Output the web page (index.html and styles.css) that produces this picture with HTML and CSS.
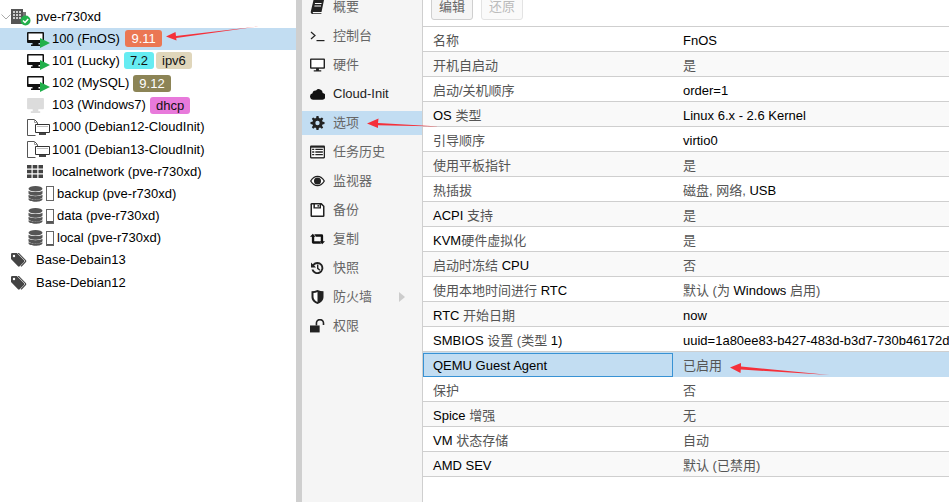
FILE: index.html
```html
<!DOCTYPE html>
<html lang="zh">
<head>
<meta charset="utf-8">
<title>pve-r730xd</title>
<link rel="stylesheet" href="styles.css">
</head>
<body>
<svg class="defs" width="0" height="0">
  <defs>
    <symbol id="vm-on" viewBox="0 0 17 14"><path d="M1 0h15a1 1 0 0 1 1 1v9a1 1 0 0 1-1 1h-4.500v1.500H13V14H4v-1.500h1.500V11H1a1 1 0 0 1-1-1V1a1 1 0 0 1 1-1z" fill="#111"/><path d="M1.500 1.500h14V8h-14z" fill="#fff"/></symbol>
    <symbol id="tpl" viewBox="0 0 23 17"><path d="M.5.500h7l3 3v2M.5.500v16h8" fill="none" stroke="#555"/><path d="M7.500.500v3h3" fill="none" stroke="#999"/><path d="M8.500 5.500h14v8h-14z" fill="#fff" stroke="#333"/><path d="M12 14h7v2h-7z" fill="#444"/><path d="M10 7h11v1H10z" fill="#bbb"/></symbol>
    <symbol id="grid" viewBox="0 0 16 13"><path d="M0 0h4.500v3.500H0zM5.700 0h4.600v3.500H5.700zM11.500 0H16v3.500h-4.500zM0 4.700h4.500v3.600H0zM5.700 4.700h4.600v3.600H5.700zM11.500 4.700H16v3.600h-4.500zM0 9.500h4.500V13H0zM5.700 9.500h4.600V13H5.700zM11.500 9.500H16V13h-4.500z" fill="#444"/></symbol>
    <symbol id="db" viewBox="0 0 15 16"><ellipse cx="7.500" cy="2.800" rx="7" ry="2.800" fill="#555"/><path d="M.5 4.700c1.500 1.800 12.500 1.800 14 0v2.500c0 3.300-14 3.300-14 0zM.5 8.800c1.500 1.800 12.500 1.800 14 0v2.300c0 3.300-14 3.300-14 0zM.5 12.300c1.500 1.800 12.500 1.800 14 0v1c0 3.300-14 3.300-14 0z" fill="#555"/></symbol>
    <symbol id="tag" viewBox="0 0 17 14"><path d="M0 1.200A1.200 1.200 0 0 1 1.200 0h4.600L13 7.200a1.200 1.200 0 0 1 0 1.700l-4.300 4.300a1.200 1.200 0 0 1-1.700 0L0 6z" fill="#444"/><path d="M8 0l7 7.200a1.500 1.500 0 0 1 0 1.800l-4.500 4.700-.9-.6 4.300-4.500a1 1 0 0 0 0-1.200L6.500 0z" fill="#444"/><circle cx="3" cy="3" r="1.200" fill="#fff"/></symbol>
  </defs>
</svg>

<div class="app">
  <aside class="tree">
    <div class="row">
      <svg class="chev" viewBox="0 0 10 6" width="10" height="6"><path d="M.5.500L5 5 9.500.500" fill="none" stroke="#aaa"/></svg>
      <span class="node-icon">
        <svg viewBox="0 0 20 18" width="20" height="18"><path d="M0 1h12v15H0z" fill="#555"/><path d="M12 4h3v6h-3z" fill="#777"/><path d="M2 3h2v2H2zM5 3h2v2H5zM8 3h2v2H8zM2 6h2v2H2zM5 6h2v2H5zM8 6h2v2H8zM2 9h2v2H2zM5 9h2v2H5zM8 9h2v2H8z" fill="#ccc"/><circle cx="14.500" cy="12.500" r="5" fill="#21b04b"/><path d="M12 12.500l2 2 3.200-3.600" fill="none" stroke="#fff" stroke-width="1.500"/></svg>
      </span>
      <span>pve-r730xd</span>
    </div>
    <div class="row guest selected"><span class="guest-icon"><svg width="17" height="14"><use href="#vm-on"/></svg><i class="play"></i></span><span>100 (FnOS)</span><span class="tag t-orange">9.11</span></div>
    <div class="row guest"><span class="guest-icon"><svg width="17" height="14"><use href="#vm-on"/></svg><i class="play"></i></span><span>101 (Lucky)</span><span class="tag t-cyan">7.2</span><span class="tag t-sand">ipv6</span></div>
    <div class="row guest"><span class="guest-icon"><svg width="17" height="14"><use href="#vm-on"/></svg><i class="play"></i></span><span>102 (MySQL)</span><span class="tag t-olive">9.12</span></div>
    <div class="row guest"><span class="guest-icon off"><svg width="18" height="16" viewBox="0 0 18 16"><path d="M1 0h16a1 1 0 0 1 1 1v10a1 1 0 0 1-1 1h-5v2h2v2H4v-2h2v-2H1a1 1 0 0 1-1-1V1a1 1 0 0 1 1-1z" fill="#dcdcdc"/></svg></span><span>103 (Windows7)</span><span class="tag t-pink">dhcp</span></div>
    <div class="row guest"><span class="guest-icon"><svg class="tpl" width="23" height="17"><use href="#tpl"/></svg></span><span>1000 (Debian12-CloudInit)</span></div>
    <div class="row guest"><span class="guest-icon"><svg class="tpl" width="23" height="17"><use href="#tpl"/></svg></span><span>1001 (Debian13-CloudInit)</span></div>
    <div class="row guest"><span class="guest-icon grid"><svg width="16" height="13"><use href="#grid"/></svg></span><span>localnetwork (pve-r730xd)</span></div>
    <div class="row guest"><span class="storage-icon"><svg width="15" height="16"><use href="#db"/></svg><i class="gauge"></i></span><span>backup (pve-r730xd)</span></div>
    <div class="row guest"><span class="storage-icon"><svg width="15" height="16"><use href="#db"/></svg><i class="gauge g-mid"></i></span><span>data (pve-r730xd)</span></div>
    <div class="row guest"><span class="storage-icon"><svg width="15" height="16"><use href="#db"/></svg><i class="gauge g-low"></i></span><span>local (pve-r730xd)</span></div>
    <div class="row pool"><span class="tag-icon"><svg width="17" height="14"><use href="#tag"/></svg></span><span>Base-Debain13</span></div>
    <div class="row pool"><span class="tag-icon"><svg width="17" height="14"><use href="#tag"/></svg></span><span>Base-Debian12</span></div>
  </aside>

  <div class="splitter"></div>

  <nav class="nav">
    <div class="nav-item"><svg class="nav-icon" viewBox="0 0 14 14"><path d="M3 0h10.500L11 12H2.500a1 1 0 0 0 0 1.200H11l-.2.800H2C.8 14 0 13 .3 11.500z" fill="#222"/><path d="M4.500 3h6.500v1H4.300zM4 5.500h6.500v1H3.800z" fill="#fff"/></svg><span>概要</span></div>
    <div class="nav-item"><svg class="nav-icon" viewBox="0 0 14 14"><path d="M.5 3l4 3.500-4 3.500" fill="none" stroke="#222" stroke-width="1.200"/><path d="M6 11h8v1.200H6z" fill="#222"/></svg><span>控制台</span></div>
    <div class="nav-item"><svg class="nav-icon" viewBox="0 0 16 14"><path d="M1 0h14a1 1 0 0 1 1 1v9a1 1 0 0 1-1 1H9.500v1.500H12V14H4v-1.500h2.500V11H1a1 1 0 0 1-1-1V1a1 1 0 0 1 1-1z" fill="#222"/><path d="M1.500 1.500h13v8h-13z" fill="#fff"/></svg><span>硬件</span></div>
    <div class="nav-item"><svg class="nav-icon" viewBox="0 0 16 12"><path d="M3.500 12A3.500 3.500 0 0 1 2.700 5.100 3 3 0 0 1 6.400 2.300 4 4 0 0 1 13.500 5 3.500 3.500 0 0 1 12.500 12z" fill="#111"/></svg><span class="latin">Cloud-Init</span></div>
    <div class="nav-item active"><svg class="nav-icon" viewBox="0 0 14 14"><path d="M6 0h2l.4 2 1.300.5L11.400 1.400 12.800 2.800 11.600 4.500l.5 1.300 1.900.3v2l-2 .4-.5 1.200 1.200 1.700-1.400 1.400-1.700-1.200-1.200.5-.4 1.900H6l-.4-2-1.200-.5-1.700 1.200-1.400-1.400 1.200-1.700-.5-1.200L0 8V6l2-.3.500-1.300L1.300 2.800l1.400-1.400 1.700 1.100 1.200-.5z" fill="#222"/><circle cx="7" cy="7" r="2.200" fill="#c2ddf2"/></svg><span>选项</span></div>
    <div class="nav-item"><svg class="nav-icon" viewBox="0 0 14 12"><path d="M1 0h12a1 1 0 0 1 1 1v10a1 1 0 0 1-1 1H1a1 1 0 0 1-1-1V1a1 1 0 0 1 1-1z" fill="#222"/><path d="M1.200 2h11.600v8.800H1.200z" fill="#fff"/><path d="M2 3h2v1.200H2zM5 3h7v1.200H5zM2 5.400h2v1.200H2zM5 5.400h7v1.200H5zM2 7.800h2V9H2zM5 7.800h7V9H5z" fill="#222"/></svg><span>任务历史</span></div>
    <div class="nav-item"><svg class="nav-icon" viewBox="0 0 14 10"><path d="M0 5c3.500-6.600 10.500-6.600 14 0-3.500 6.600-10.500 6.600-14 0z" fill="#222"/><path d="M1.300 5c3-5 8.400-5 11.400 0-3 5-8.400 5-11.400 0z" fill="#fff"/><circle cx="7" cy="5" r="3.300" fill="#222"/></svg><span>监视器</span></div>
    <div class="nav-item"><svg class="nav-icon" viewBox="0 0 12 12"><path d="M1 0h8.500L12 2.500V11a1 1 0 0 1-1 1H1a1 1 0 0 1-1-1V1a1 1 0 0 1 1-1z" fill="#222"/><path d="M1.300 1.300h1.200v3.500h6.500V1.500l1.700 1.600v7.600H1.300z" fill="#fff"/><path d="M3.800 1.300h4v2.300h-4zM2.500 6.500h7v3.600h-7z" fill="#fff"/><path d="M6 1.800h1.200v1.500H6z" fill="#222"/></svg><span>备份</span></div>
    <div class="nav-item"><svg class="nav-icon" viewBox="0 0 16 11"><path d="M3 0l3 3.200H4.500V8H10l2 2.500H3.500Q2 10.500 2 9V3.200H0zM13 11l3-3.200h-2V2Q14 .5 12.500 .5H4.500L6.500 3h5v4.800H10z" fill="#111"/></svg><span>复制</span></div>
    <div class="nav-item"><svg class="nav-icon" viewBox="0 0 14 14"><path d="M2.200 3.200A6 6 0 1 1 1 8.500h2A4.100 4.100 0 1 0 3.600 4.600L5.500 6.400H.5V1.500z" fill="#222"/><path d="M6.500 3.500h1.400v3.600l2 1.600-.9 1-2.500-2z" fill="#222"/></svg><span>快照</span></div>
    <div class="nav-item"><svg class="nav-icon" viewBox="0 0 12 14"><path d="M6 0c2 .8 4 1.200 6 1.200V7c0 3.500-3 6-6 7-3-1-6-3.500-6-7V1.200C2 1.200 4 .8 6 0z" fill="#222"/><path d="M6 2v10c-2-.9-4-2.700-4-5V3c1.400-.1 2.700-.5 4-1z" fill="#fff"/></svg><span>防火墙</span><i class="caret"></i></div>
    <div class="nav-item"><svg class="nav-icon" viewBox="0 0 14 12"><path d="M0 5.500h9V12H0z" fill="#222"/><path d="M6 5.500V3.300a3.300 3.300 0 0 1 6.600 0V5" fill="none" stroke="#222" stroke-width="1.500"/></svg><span>权限</span></div>
  </nav>

  <main class="main">
    <div class="toolbar">
      <button class="btn">编辑</button>
      <button class="btn disabled">还原</button>
    </div>
    <div class="table">
      <div class="tr"><div class="k"><span class="zh">名称</span></div><div class="v">FnOS</div></div>
      <div class="tr"><div class="k"><span class="zh">开机自启动</span></div><div class="v"><span class="zh">是</span></div></div>
      <div class="tr"><div class="k"><span class="zh">启动/关机顺序</span></div><div class="v">order=1</div></div>
      <div class="tr"><div class="k">OS <span class="zh">类型</span></div><div class="v">Linux 6.x - 2.6 Kernel</div></div>
      <div class="tr"><div class="k"><span class="zh">引导顺序</span></div><div class="v">virtio0</div></div>
      <div class="tr"><div class="k"><span class="zh">使用平板指针</span></div><div class="v"><span class="zh">是</span></div></div>
      <div class="tr"><div class="k"><span class="zh">热插拔</span></div><div class="v"><span class="zh">磁盘, 网络,</span> USB</div></div>
      <div class="tr"><div class="k">ACPI <span class="zh">支持</span></div><div class="v"><span class="zh">是</span></div></div>
      <div class="tr"><div class="k">KVM<span class="zh">硬件虚拟化</span></div><div class="v"><span class="zh">是</span></div></div>
      <div class="tr"><div class="k"><span class="zh">启动时冻结</span> CPU</div><div class="v"><span class="zh">否</span></div></div>
      <div class="tr"><div class="k"><span class="zh">使用本地时间进行</span> RTC</div><div class="v"><span class="zh">默认 (为</span> Windows <span class="zh">启用)</span></div></div>
      <div class="tr"><div class="k">RTC <span class="zh">开始日期</span></div><div class="v">now</div></div>
      <div class="tr"><div class="k">SMBIOS <span class="zh">设置 (类型</span> 1)</div><div class="v">uuid=1a80ee83-b427-483d-b3d7-730b46172d</div></div>
      <div class="tr current"><div class="k">QEMU Guest Agent</div><div class="v"><span class="zh">已启用</span></div></div>
      <div class="tr"><div class="k"><span class="zh">保护</span></div><div class="v"><span class="zh">否</span></div></div>
      <div class="tr"><div class="k">Spice <span class="zh">增强</span></div><div class="v"><span class="zh">无</span></div></div>
      <div class="tr"><div class="k">VM <span class="zh">状态存储</span></div><div class="v"><span class="zh">自动</span></div></div>
      <div class="tr"><div class="k">AMD SEV</div><div class="v"><span class="zh">默认 (已禁用)</span></div></div>
    </div>
  </main>
</div>

<svg class="arrows" width="949" height="502" viewBox="0 0 949 502">
  <path d="M258.500 26.500 L176 36 L175.500 32 L166 36.500 L176.500 40.500 L176.200 38 Z" fill="#f5303a"/>
  <path d="M439.500 126.500 L378 123 L378.500 118.500 L367 123.500 L378 128 L378 125.200 Z" fill="#f5303a"/>
  <path d="M829.500 375 L741 366.500 L741 363 L730 367.500 L740.500 373 L740.800 369.500 Z" fill="#f5303a"/>
</svg>
</body>
</html>
```
FILE: styles.css
```css
* { box-sizing: border-box; }
html, body { margin: 0; height: 100%; }
body {
  width: 949px;
  height: 502px;
  overflow: hidden;
  position: relative;
  background: #fff;
  color: #000;
  font: 13px/20px "Liberation Sans", "Noto Sans CJK SC", sans-serif;
}
.defs { position: absolute; }
.app { display: flex; height: 502px; }

.tree { width: 296px; flex: none; padding-top: 5.600px; background: #fff; }
.row { display: flex; align-items: center; height: 22.170px; white-space: nowrap; }
.chev { margin-left: 1px; flex: none; }
.node-icon { display: flex; width: 25px; }
.guest { padding-left: 27px; }
.selected { background: #c2ddf2; }
.guest-icon { position: relative; display: flex; align-items: center; width: 25px; height: 20px; flex: none; }
.guest-icon.off svg { width: 17px; height: 15px; }
.guest-icon.grid svg { width: 16px; height: 13px; }
.play {
  position: absolute;
  left: 13px;
  top: 9px;
  width: 0;
  height: 0;
  border-left: 10px solid #21b04b;
  border-top: 5.500px solid transparent;
  border-bottom: 5.500px solid transparent;
}
.storage-icon { display: flex; align-items: center; gap: 3px; width: 30px; flex: none; padding-left: 1px; }
.gauge { display: block; width: 8px; height: 15px; border: 1px solid #666; background: #fff; }
.g-mid { background: linear-gradient(to top, #555 2px, #fff 2px); }
.g-low { background: linear-gradient(to top, #555 1px, #fff 1px); }
.pool { padding-left: 11px; }
.tag-icon { display: flex; width: 25px; flex: none; }
.tag {
  margin-left: 4px;
  padding: 0 6px;
  height: 17px;
  line-height: 17px;
  border-radius: 3px;
  font-size: 13px;
  color: #111;
}
.tag + .tag { margin-left: 2px; }
.t-orange { background: #eb7753; color: #fff; margin-left: 5px; padding: 0 6.500px; }
.t-cyan { background: #66ecf2; }
.t-sand { background: #e0d6bb; }
.t-olive { background: #8c8456; color: #fff; }
.t-pink { background: #e87adb; }

.splitter { width: 6px; flex: none; background: #cfcfcf; }

.nav { width: 120px; flex: none; background: #f5f5f5; }
.nav-item {
  position: relative;
  display: flex;
  align-items: center;
  height: 24px;
  margin-bottom: 5px;
  padding-left: 31px;
  color: #666;
}
.nav-item:first-child { margin-top: -5px; }
.nav-item .latin { color: #222; }
.nav-item.active { background: #c2ddf2; }
.nav-icon { position: absolute; left: 8px; top: 5px; width: 15px; height: 14px; }
.caret {
  position: absolute;
  left: 97px;
  top: 7px;
  width: 0;
  height: 0;
  border-left: 6px solid #ccc;
  border-top: 5px solid transparent;
  border-bottom: 5px solid transparent;
}

.main { flex: 1; min-width: 0; border-left: 1px solid #cfcfcf; overflow: hidden; }
.toolbar { display: flex; gap: 8px; height: 26px; padding-left: 8px; align-items: flex-end; padding-bottom: 6px; }
.btn {
  width: 42px;
  height: 26px;
  padding: 0;
  flex: none;
  border: 1px solid #cfcfcf;
  border-radius: 3px;
  background: #f5f5f5;
  color: #666;
  font: inherit;
}
.btn.disabled { color: #bbb; border-color: #e3e3e3; background: #fafafa; }
.table { border-top: 1px solid #cfcfcf; }
.tr { display: flex; height: 25px; padding-top: 4px; border-bottom: 1px solid #cfcfcf; align-items: center; white-space: nowrap; }
.tr:nth-child(even) { background: #f9f9f9; }
.k { width: 250px; flex: none; padding-left: 10px; }
.v { flex: none; padding-left: 10px; }
.zh { color: #555; }
.tr.current { background: #c2ddf2; border-bottom-color: #c2ddf2; padding-top: 0; }
.tr.current .k { align-self: flex-start; height: 24px; margin-top: 1px; padding-top: 2px; border: 1px solid #3892d4; display: flex; align-items: center; padding-left: 9px; }
.tr.current .v { padding-top: 4px; }

.arrows { position: absolute; left: 0; top: 0; pointer-events: none; }
```
